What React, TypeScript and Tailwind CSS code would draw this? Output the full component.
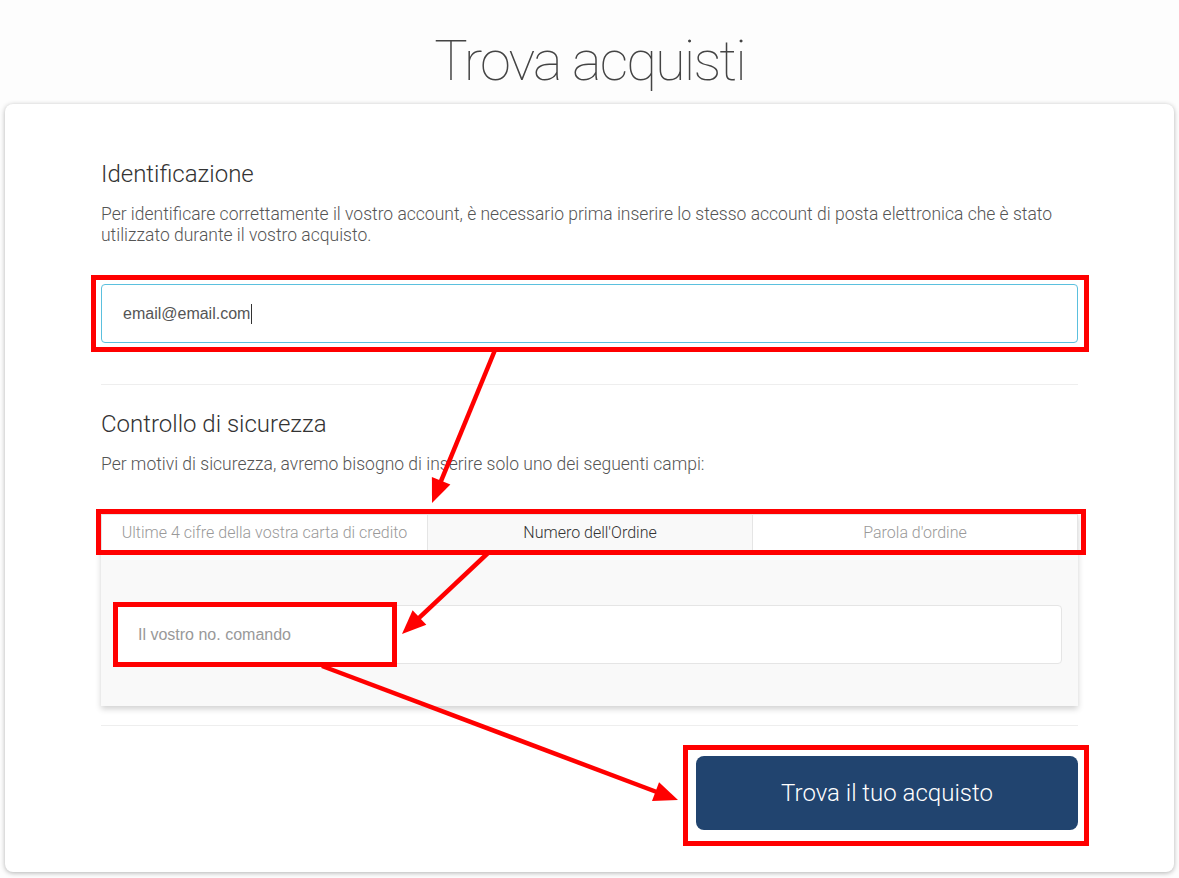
import React from "react";

function Arrow({ x1, y1, x2, y2 }: { x1: number; y1: number; x2: number; y2: number }) {
  const dx = x2 - x1;
  const dy = y2 - y1;
  const len = Math.sqrt(dx * dx + dy * dy);
  const ux = dx / len;
  const uy = dy / len;
  const headLen = 24;
  const headHalf = 10;
  const bx = x2 - ux * headLen;
  const by = y2 - uy * headLen;
  const px = -uy;
  const py = ux;
  const pts = `${x2},${y2} ${bx + px * headHalf},${by + py * headHalf} ${bx - px * headHalf},${by - py * headHalf}`;
  return (
    <g>
      <line x1={x1} y1={y1} x2={bx + ux * 2} y2={by + uy * 2} stroke="#ff0000" strokeWidth={4.5} />
      <polygon points={pts} fill="#ff0000" />
    </g>
  );
}

export default function App() {
  return (
    <div className="relative min-h-screen bg-[#fdfdfd] font-['Roboto',sans-serif]">
      <div className="pt-[33px]">
        <h1 className="h-[56px] text-center text-[56px] font-thin leading-none tracking-[-1.9px] text-[#444]">Trova acquisti</h1>
      </div>
      <div className="mx-[5px] mt-[15px] rounded-lg bg-white px-[96px] pb-[42px] pt-[56px] shadow-[0_1px_5px_rgba(0,0,0,0.3)]">
        <h2 className="text-[24px] font-light leading-[29px] text-[#333]">Identificazione</h2>
        <p className="mt-[15px] text-[17.5px] font-light leading-[21px] text-[#555]">
          Per identificare correttamente il vostro account, è necessario prima inserire lo stesso account di posta elettronica che è stato utilizzato durante il vostro acquisto.
        </p>
        <div className="mt-[38px] flex h-[59px] items-center rounded border border-[#5bc0de] px-[21px] font-['Liberation_Sans',Arial,sans-serif] text-[16px] text-[#555]">
          <span>email@email.com</span>
          <span className="ml-[1px] inline-block h-[20px] w-px bg-[#333]" />
        </div>
        <div className="mt-[41px] h-px bg-[#eeeeee]" />
        <h2 className="mt-[25px] text-[24px] font-light leading-[29px] text-[#333]">Controllo di sicurezza</h2>
        <p className="mt-[15px] text-[17.5px] font-light leading-[21px] text-[#555]">
          Per motivi di sicurezza, avremo bisogno di inserire solo uno dei seguenti campi:
        </p>
        <div className="mt-[39px] shadow-[0_3px_6px_rgba(0,0,0,0.18)]">
          <div className="grid h-[37px] grid-cols-3 border border-[#e5e5e5] text-[16px] font-light">
            <div className="flex items-center justify-center bg-white text-[#999]">Ultime 4 cifre della vostra carta di credito</div>
            <div className="flex items-center justify-center border-l border-[#e5e5e5] bg-[#f9f9f9] text-[#333]">Numero dell'Ordine</div>
            <div className="flex items-center justify-center border-l border-[#e5e5e5] bg-white text-[#999]">Parola d'ordine</div>
          </div>
          <div className="bg-[#f9f9f9] pb-[42px] pl-[15px] pr-[16px] pt-[54px]">
            <div className="flex h-[59px] items-center rounded border border-[#e5e5e5] bg-white px-[21px] font-['Liberation_Sans',Arial,sans-serif] text-[16px] text-[#999]">
              Il vostro no. comando
            </div>
          </div>
        </div>
        <div className="mt-[19px] h-px bg-[#eeeeee]" />
        <div className="mt-[30px] flex justify-end">
          <button className="h-[74px] w-[382px] rounded-lg bg-[#21446f] text-[24px] font-light text-white">Trova il tuo acquisto</button>
        </div>
      </div>

      <div className="pointer-events-none absolute left-[91px] top-[275px] h-[77px] w-[998px] border-[5px] border-[#ff0000]" />
      <div className="pointer-events-none absolute left-[96px] top-[509px] h-[46px] w-[990px] border-[5px] border-[#ff0000]" />
      <div className="pointer-events-none absolute left-[113px] top-[602px] h-[65px] w-[284px] border-[5px] border-[#ff0000]" />
      <div className="pointer-events-none absolute left-[683px] top-[745px] h-[101px] w-[406px] border-[5px] border-[#ff0000]" />

      <svg className="pointer-events-none absolute left-0 top-0" width={1179} height={878}>
        <Arrow x1={495} y1={350} x2={432} y2={503} />
        <Arrow x1={488} y1={553} x2={402} y2={634} />
        <Arrow x1={322} y1={666} x2={678} y2={800} />
      </svg>
    </div>
  );
}
